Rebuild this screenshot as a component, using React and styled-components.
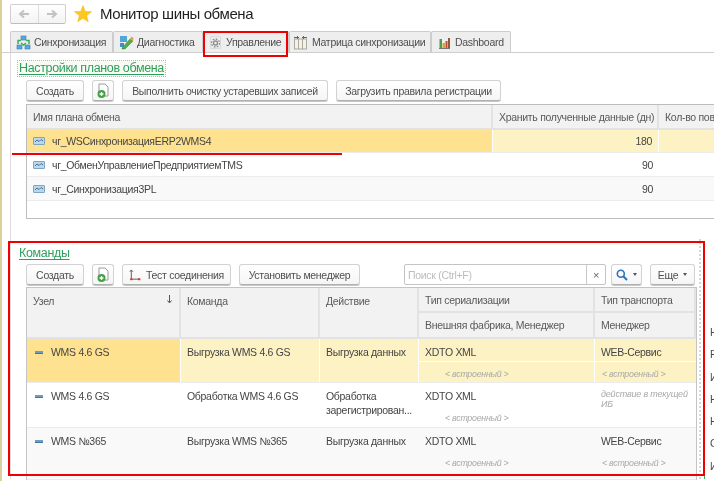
import React from "react";
import styled, { createGlobalStyle } from "styled-components";

const Global = createGlobalStyle`
  html, body { margin: 0; padding: 0; background: #fff; }
  body { font-family: "Liberation Sans", Arial, sans-serif; font-size: 10.5px; letter-spacing: -0.3px; color: #4a4a4a; }
  svg { flex-shrink: 0; }
`;

const Page = styled.div`
  position: relative; width: 712px; height: 481px; overflow: hidden; background: #fff;
  border-left: 2px solid #d9d09c; filter: blur(0.4px);
`;
const Header = styled.header`
  display: flex; align-items: center; height: 21px; padding: 3px 0 0 8px; margin-bottom: 7px;
`;
const NavGroup = styled.div`
  display: flex; width: 56px; height: 20px; box-sizing: border-box; border: 1px solid #d0d0d0; border-bottom-color: #bdbdbd;
  border-radius: 2px; background: linear-gradient(#fff, #f3f3f3);
`;
const NavBtn = styled.div`
  flex: 1; display: flex; align-items: center; justify-content: center;
  & + & { border-left: 1px solid #dcdcdc; }
`;
const StarWrap = styled.div`margin: 0 8px 0 8px; display: flex;`;
const Title = styled.h1`margin: 0; font-weight: 400; font-size: 15px; letter-spacing: -0.4px; color: #1f1f1f; white-space: nowrap;`;
const Tabs = styled.nav`
  display: flex; height: 21px; padding-left: 8px; border-bottom: 1px solid #cfcfcf;
`;
const Tab = styled.div`
  display: flex; align-items: center; gap: ${p => p.$gap || 3}px; box-sizing: border-box; width: ${p => p.$w}px; height: ${p => p.$active ? 22 : 21}px;
  padding-left: ${p => p.$pad}px; background: ${p => p.$active ? "#fff" : "#eeeeee"};
  border: 1px solid #cccccc; border-bottom: 0; border-radius: 2px 2px 0 0; white-space: nowrap;
  color: #4f4f4f; position: relative; z-index: ${p => p.$active ? 1 : 0};
`;
const Panel = styled.main`margin-left: 8px; border-left: 1px solid #dedede;`;
const SectionTitle = styled.h2`
  display: inline-block; margin: ${p => p.$top}px 0 0 7px; padding: 0 1px; height: 15px; line-height: 15px; font-weight: 400; font-size: 12.5px;
  letter-spacing: -0.35px; color: #2f9e5c; text-decoration: underline; text-underline-offset: 2px; white-space: nowrap;
  ${p => p.$outlined && "outline: 1px dotted #b7b7a4; background: #f7fbf4;"}
`;
const Toolbar = styled.div`
  display: flex; gap: 8px; margin: ${p => p.$top}px 0 ${p => p.$bottom}px 15px; height: 21px; align-items: stretch;
`;
const Button = styled.button`
  display: flex; align-items: center; justify-content: center; gap: ${p => p.$gap || 5}px; box-sizing: border-box; width: ${p => p.$w}px; padding: 0;
  font: inherit; letter-spacing: inherit; color: #4f4f4f; white-space: nowrap;
  border: 1px solid #d2d2d2; border-bottom-color: #b0b0b0; border-radius: 3px;
  background: linear-gradient(#fff, #f5f5f5); box-shadow: 0 1px 0 #c8c8c8;
`;
const Search = styled.div`
  display: flex; width: 202px; box-sizing: border-box; margin-left: 36px; margin-right: -3px; border: 1px solid #c4c4c4; border-radius: 2px; background: #fff;
`;
const SearchInput = styled.div`flex: 1; padding: 4px 3px; color: #bdbdbd;`;
const SearchClear = styled.div`
  width: 18px; border-left: 1px solid #c8c8c8; display: flex; align-items: center; justify-content: center; color: #666; font-size: 11px;
`;
const Caret = styled.span`
  width: 0; height: 0; border-left: 2.5px solid transparent; border-right: 2.5px solid transparent; border-top: 3px solid #555;
`;
const PlansTable = styled.section`
  display: grid; grid-template-columns: 466px 166px 200px; grid-template-rows: 25px 23px 24px 24px 1fr;
  width: 840px; height: 115px; box-sizing: border-box; margin-left: 15px; border: 1px solid #bdbdbd; border-right: 0;
`;
const HeadCell = styled.div`
  display: flex; ${p => p.$span && `grid-row: span ${p.$span};`} align-items: ${p => p.$top ? "flex-start" : "center"}; justify-content: space-between;
  box-sizing: border-box; padding: ${p => p.$top ? "7px" : "0"} 6px 0 6px; background: #f2f2f2; color: #5a5a5a;
  border-right: 2px solid #e2e2e2; border-bottom: 2px solid #e2e2e2; white-space: nowrap; overflow: hidden;
`;
const Cell = styled.div`
  display: flex; align-items: center; gap: 7px; box-sizing: border-box; padding: 0 6px; white-space: nowrap; overflow: hidden;
  justify-content: ${p => p.$right ? "flex-end" : "flex-start"};
  background: ${p => p.$bg || "#fff"}; color: #454545;
  border-bottom: 1px solid ${p => p.$line || "#ececec"};
  border-right: ${p => p.$sep ? "1px solid #fff" : "0"};
`;
const Spacer = styled.div`grid-column: 1 / -1;`;
const Lower = styled.div`display: flex; margin-top: 20px; height: 240px;`;
const LowerMain = styled.div`width: 687px; flex: none;`;
const Commands = styled.section`
  display: grid; grid-template-columns: 154px 139px 99px 176px 101px; grid-template-rows: 25px 26px 44px 45px 52px;
  width: 671px; box-sizing: border-box; margin-left: 15px; border: 1px solid #c4c4c4; border-bottom: 0; border-right-width: 2px;
`;
const Body = styled.div`
  box-sizing: border-box; padding: 6px 6px 0 6px; background: ${p => p.$bg || "#fff"}; color: #454545; line-height: 14px; position: relative;
  border-bottom: 1px solid ${p => p.$line || "#ececec"}; border-right: ${p => p.$sep ? "1px solid #fff" : "0"};
  ${p => p.$split && "&::after { content: ''; position: absolute; left: 0; right: 0; top: 22px; height: 1px; background: #fff; }"}
`;
const NodeLine = styled.div`display: flex; align-items: center; gap: 8px; margin-left: 2px;`;
const Clip = styled.div`overflow: hidden; text-overflow: ellipsis; white-space: nowrap;`;
const Embedded = styled.div`
  margin-top: 8px; padding-left: ${p => p.$pad}px; font-size: 8.8px; letter-spacing: -0.25px; font-style: italic; color: #a9a9a9; white-space: nowrap;
`;
const Hint = styled.div`font-size: 9px; letter-spacing: -0.2px; font-style: italic; color: #a9a9a9; line-height: 10px; margin-top: 0;`;
const Side = styled.aside`
  flex: 1; display: flex; margin-left: 1px; border-left: 2px dotted #d6d6d6; padding-left: 3px; overflow: hidden;
`;
const GreenRail = styled.div`width: 1px; margin-top: 41px; background: #3fa56b; flex: none;`;
const SideList = styled.ul`
  list-style: none; margin: 82px 0 0 5px; padding: 0; line-height: 22.3px; color: #4a4a4a;
`;
const RedFrame = styled.div`
  position: absolute; box-sizing: border-box; left: ${p => p.$x}px; top: ${p => p.$y}px; width: ${p => p.$w}px; height: ${p => p.$h}px;
  border: 2px solid #f00000; pointer-events: none; z-index: 3;
`;
const RedLine = styled.div`position: absolute; left: 10px; top: 153px; width: 330px; height: 2px; background: #f00000; z-index: 3;`;

const Star = () => (
  <svg width="18" height="18" viewBox="0 0 18 18"><path d="M9 .5l2.200 5.900 6.400.3-5 3.900 1.700 6.200L9 13.300l-5.300 3.500 1.700-6.200-5-3.900 6.400-.3z" fill="#fdc620" stroke="#f0b400" strokeWidth=".5" /></svg>
);
const Arrow = ({ dir }) => (
  <svg width="12" height="10" viewBox="0 0 12 10" style={{ transform: dir === "r" ? "scaleX(-1)" : "none" }}>
    <path d="M11 5H3M6 1.500L2 5l4 3.500" fill="none" stroke="#c2c2c2" strokeWidth="2" />
  </svg>
);
const SyncIcon = () => (
  <svg width="15" height="15" viewBox="0 0 15 15">
    <rect x="5" y="1" width="5" height="4" fill="#5aa7dc" stroke="#2f7fb5" strokeWidth=".6" />
    <rect x="1" y="10" width="5" height="4" fill="#5aa7dc" stroke="#2f7fb5" strokeWidth=".6" />
    <rect x="9" y="10" width="5" height="4" fill="#5aa7dc" stroke="#2f7fb5" strokeWidth=".6" />
    <path d="M2 9V5.500h3M13 9V5.500h-3M5 8l2.500 2L10 8" fill="none" stroke="#3fae52" strokeWidth="1.500" />
  </svg>
);
const DiagIcon = () => (
  <svg width="15" height="15" viewBox="0 0 15 15">
    <rect x="1" y="1" width="7" height="6" fill="#52a5d8" />
    <rect x="1" y="8" width="4" height="4" fill="#3f8fc7" />
    <path d="M3 13l8-9 3 2-8 8H3z" fill="#52ae4a" stroke="#2f7f33" strokeWidth=".5" />
    <path d="M11 4l1.500-2.500L14.500 3 14 6z" fill="#e0a34a" />
  </svg>
);
const GearIcon = () => (
  <svg width="15" height="15" viewBox="0 0 15 15" fill="none" stroke="#8a8a8a">
    <path d="M2.500 1.500h10v12h-10z" stroke="#d4d4d4" strokeWidth=".8" />
    <circle cx="7.500" cy="8" r="2" strokeWidth="1.300" />
    <circle cx="7.500" cy="8" r="4" strokeWidth="1.300" strokeDasharray="1.700 1.400" />
  </svg>
);
const MatrixIcon = () => (
  <svg width="15" height="15" viewBox="0 0 15 15">
    <rect x="1.500" y="4" width="12" height="10" fill="#f4f1e6" stroke="#9a9a8c" strokeWidth=".8" />
    <path d="M5.500 4v10M9.500 4v10" stroke="#9a9a8c" strokeWidth=".8" />
    <path d="M1 2.500h5M4.500 1v3M9 2.500h5M10.500 1v3" stroke="#5f6a5f" strokeWidth="1" />
  </svg>
);
const ChartIcon = () => (
  <svg width="13" height="13" viewBox="0 0 13 13">
    <path d="M1 12.500h11" stroke="#777" />
    <rect x="1.500" y="3" width="2.500" height="9" fill="#4f9b50" />
    <rect x="4.500" y="7" width="2.500" height="5" fill="#d6a53b" />
    <rect x="7.500" y="5" width="2" height="7" fill="#c24a36" />
    <rect x="10" y="2" width="2" height="10" fill="#8c5a3a" />
  </svg>
);
const AddDoc = () => (
  <svg width="14" height="16" viewBox="0 0 14 16">
    <path d="M3 1h6l3 3v9H3z" fill="#fff" stroke="#9a9a9a" />
    <circle cx="5.500" cy="11" r="4" fill="#43a047" />
    <path d="M3.500 11h4M5.500 9v4" stroke="#fff" strokeWidth="1.300" />
  </svg>
);
const PlanIcon = () => (
  <svg width="12" height="8" viewBox="0 0 12 8">
    <rect x=".5" y=".5" width="11" height="7" rx=".5" fill="#bcd6ea" stroke="#7ea5c4" />
    <path d="M2 5l2-2 2 1.500L8 2.500 10 4" fill="none" stroke="#33688f" strokeWidth=".9" />
  </svg>
);
const NodeIcon = () => (
  <svg width="8" height="3" viewBox="0 0 8 3"><rect width="8" height="3" fill="#6f9cc0" /><rect y="2" width="8" height="1" fill="#46739a" /></svg>
);
const ConnIcon = () => (
  <svg width="12" height="14" viewBox="0 0 13 14">
    <path d="M2.500 2v9.500H11" fill="none" stroke="#555" />
    <path d="M.8 3.500L2.500 1.500l1.700 2" fill="none" stroke="#555" />
    <circle cx="2.500" cy="11.500" r="1.300" fill="#e23a2a" />
    <circle cx="11" cy="11.500" r="1.300" fill="#e23a2a" />
  </svg>
);
const SearchIcon = () => (
  <svg width="12" height="12" viewBox="0 0 12 12">
    <circle cx="4.800" cy="4.800" r="3.500" fill="none" stroke="#2d73b8" strokeWidth="1.600" />
    <path d="M7.500 7.500l3.500 3.500" stroke="#2d73b8" strokeWidth="2" />
  </svg>
);
const SortDown = () => (
  <svg width="7" height="9" viewBox="0 0 7 9"><path d="M3.500 0v7M1.500 5.500l2 2.500 2-2.500" fill="none" stroke="#555" /></svg>
);

const plans = [
  ["чг_WSСинхронизацияERP2WMS4", "180", true],
  ["чг_ОбменУправлениеПредприятиемTMS", "90", false],
  ["чг_Синхронизация3PL", "90", false],
];
const sideLetters = ["Н", "Р", "И", "Н", "Н", "С", "И"];
const YEL = "#fee28f";
const PALE = "#fdf2c3";
const ALT = "#f9f9f9";

export default function App() {
  return (
    <Page>
      <Global />
      <Header>
        <NavGroup>
          <NavBtn><Arrow dir="l" /></NavBtn>
          <NavBtn><Arrow dir="r" /></NavBtn>
        </NavGroup>
        <StarWrap><Star /></StarWrap>
        <Title>Монитор шины обмена</Title>
      </Header>
      <Tabs>
        <Tab $w={103} $pad={5}><SyncIcon />Синхронизация</Tab>
        <Tab $w={90} $pad={5}><DiagIcon />Диагностика</Tab>
        <Tab $w={86} $pad={4} $gap={3}><GearIcon />Управление</Tab>
        <Tab $w={142} $pad={3} $gap={4}><MatrixIcon />Матрица синхронизации</Tab>
        <Tab $w={80} $pad={6} $gap={4}><ChartIcon />Dashboard</Tab>
      </Tabs>
      <Panel>
        <SectionTitle $top={8} $outlined>Настройки планов обмена</SectionTitle>
        <Toolbar $top={4} $bottom={3}>
          <Button $w={58}>Создать</Button>
          <Button $w={22}><AddDoc /></Button>
          <Button $w={206}>Выполнить очистку устаревших записей</Button>
          <Button $w={165}>Загрузить правила регистрации</Button>
        </Toolbar>
        <PlansTable>
          <HeadCell>Имя плана обмена</HeadCell>
          <HeadCell>Хранить полученные данные (дн)</HeadCell>
          <HeadCell>Кол-во повторов</HeadCell>
          {plans.map(([name, days, sel], i) => (
            <React.Fragment key={name}>
              <Cell $bg={sel ? YEL : i === 2 ? ALT : "#fff"} $sep={sel}><PlanIcon />{name}</Cell>
              <Cell $right $bg={sel ? PALE : i === 2 ? ALT : "#fff"} $sep={sel}>{days}</Cell>
              <Cell $bg={sel ? PALE : i === 2 ? ALT : "#fff"} />
            </React.Fragment>
          ))}
          <Spacer />
        </PlansTable>
        <Lower>
          <LowerMain>
            <SectionTitle $top={7}>Команды</SectionTitle>
            <Toolbar $top={3} $bottom={2}>
              <Button $w={58}>Создать</Button>
              <Button $w={22}><AddDoc /></Button>
              <Button $w={109}><ConnIcon />Тест соединения</Button>
              <Button $w={121}>Установить менеджер</Button>
              <Search>
                <SearchInput>Поиск (Ctrl+F)</SearchInput>
                <SearchClear>×</SearchClear>
              </Search>
              <Button $w={31}><SearchIcon /><Caret /></Button>
              <Button $w={45}>Еще<Caret /></Button>
            </Toolbar>
            <Commands>
              <HeadCell $span={2} $top>Узел<SortDown /></HeadCell>
              <HeadCell $span={2} $top>Команда</HeadCell>
              <HeadCell $span={2} $top>Действие</HeadCell>
              <HeadCell>Тип сериализации</HeadCell>
              <HeadCell>Тип транспорта</HeadCell>
              <HeadCell>Внешняя фабрика, Менеджер</HeadCell>
              <HeadCell>Менеджер</HeadCell>

              <Body $bg={YEL} $sep><NodeLine><NodeIcon />WMS 4.6 GS</NodeLine></Body>
              <Body $bg={PALE} $sep><Clip>Выгрузка WMS 4.6 GS</Clip></Body>
              <Body $bg={PALE} $sep><Clip>Выгрузка данных</Clip></Body>
              <Body $bg={PALE} $sep $split>XDTO XML<Embedded $pad={20}>&lt; встроенный &gt;</Embedded></Body>
              <Body $bg={PALE} $split>WEB-Сервис<Embedded $pad={1}>&lt; встроенный &gt;</Embedded></Body>

              <Body><NodeLine><NodeIcon />WMS 4.6 GS</NodeLine></Body>
              <Body><Clip>Обработка WMS 4.6 GS</Clip></Body>
              <Body><Clip>Обработка</Clip><Clip>зарегистрирован...</Clip></Body>
              <Body>XDTO XML<Embedded $pad={20}>&lt; встроенный &gt;</Embedded></Body>
              <Body><Hint>действие в текущей<br />ИБ</Hint></Body>

              <Body $bg={ALT}><NodeLine><NodeIcon />WMS №365</NodeLine></Body>
              <Body $bg={ALT}><Clip>Выгрузка WMS №365</Clip></Body>
              <Body $bg={ALT}><Clip>Выгрузка данных</Clip></Body>
              <Body $bg={ALT}>XDTO XML<Embedded $pad={20}>&lt; встроенный &gt;</Embedded></Body>
              <Body $bg={ALT}>WEB-Сервис<Embedded $pad={1}>&lt; встроенный &gt;</Embedded></Body>
            </Commands>
          </LowerMain>
          <Side>
            <GreenRail />
            <SideList>
              {sideLetters.map((l, i) => <li key={i}>{l}</li>)}
            </SideList>
          </Side>
        </Lower>
      </Panel>
      <RedFrame $x={201} $y={31} $w={85} $h={26} />
      <RedLine />
      <RedFrame $x={6} $y={241} $w={697} $h={235} />
    </Page>
  );
}
